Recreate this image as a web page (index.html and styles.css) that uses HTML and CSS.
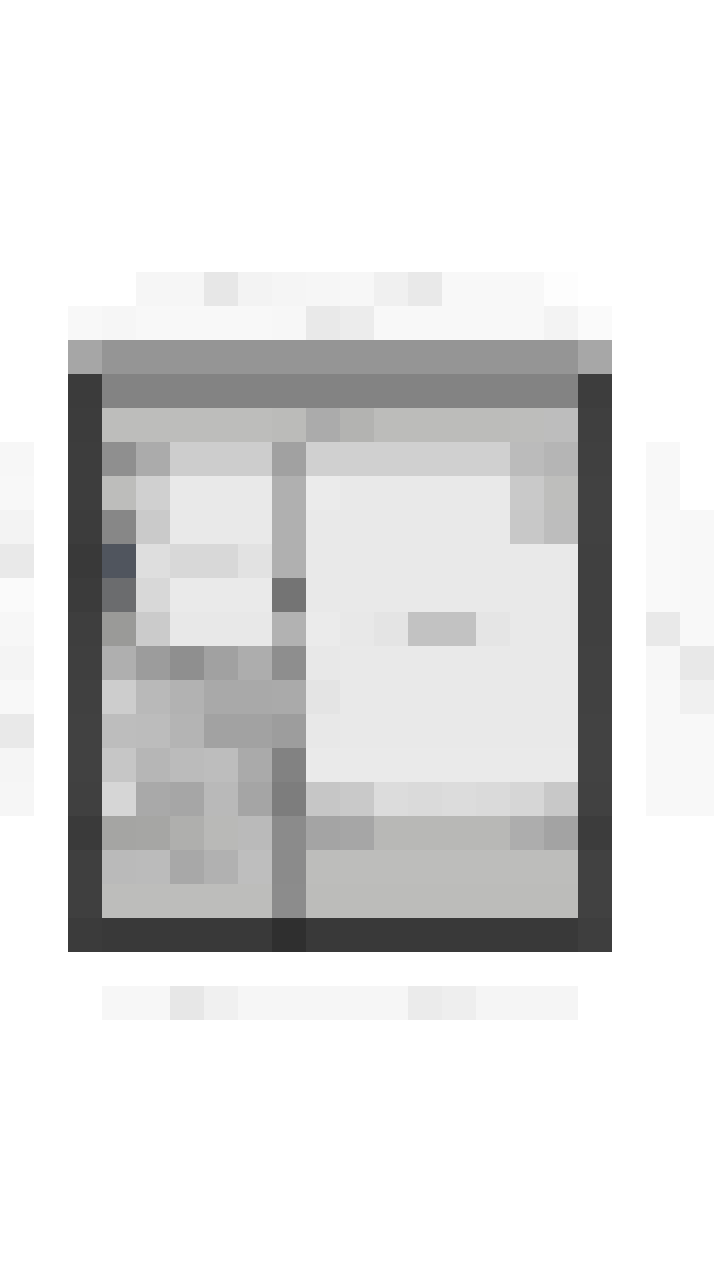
FILE: index.html
```html
<!DOCTYPE html>
<html lang="en">
<head>
<meta charset="utf-8">
<title>Mosaic</title>
<link rel="stylesheet" href="styles.css">
</head>
<body>
<main class="page">
  <div class="mosaic" id="mosaic"></div>
</main>
<script src="script.js"></script>
</body>
</html>
```

FILE: styles.css
```css
html, body {
  margin: 0;
  padding: 0;
  background: #ffffff;
}
.page {
  width: 720px;
  height: 1280px;
  padding-top: 272px;
  box-sizing: border-box;
  overflow: hidden;
}
.mosaic {
  display: grid;
  grid-template-columns: repeat(21, 34px);
  grid-auto-rows: 34px;
}
.px {
  width: 34px;
  height: 34px;
}
```

FILE: script.js
```js
(function () {
  var rows = [
    "ff ff ff ff f6 f6 e7 f3 f5 f6 f7 f0 e9 f8 f8 f8 fd ff ff ff ff",
    "ff ff f8 f6 f8 f8 f8 f8 f7 e9 ec f8 f8 f8 f8 f8 f3 fa ff ff ff",
    "ff ff a6 95 95 95 95 95 95 95 95 95 95 95 95 95 95 a7 ff ff ff",
    "ff ff 3b 83 83 83 83 83 83 83 83 83 83 83 83 83 83 3d ff ff ff",
    "ff ff 3c bdbdbb bdbdbb bdbdbb bdbdbb bdbdbb bbbbb9 ab b3b3b1 bcbcba bcbcba bcbcba bcbcba bdbdbb bd 3f ff ff ff",
    "f7 ff 3d 8f ab cd cd cd a1 d0 d0 d0 d0 d0 d0 bb b5 40 ff f8 ff",
    "f8 ff 3d bdbdbb d0 e9 e9 e9 b0 eb e9 e9 e9 e9 e9 c9 bebebc 41 ff f8 ff",
    "f3 ff 3c 87 ca e9 e9 e9 b0 e9 e9 e9 e9 e9 e9 c8 bd 41 ff f9 f8",
    "e9 ff 39 50555e de d8 d8 e2 b0 e9 e9 e9 e9 e9 e9 e9 e9 40 ff f9 f8",
    "fa ff 3b 6b6c6e d8 ea ea ea 74 e9 e9 e9 e9 e9 e9 e9 e9 40 ff f9 f8",
    "f7 ff 3e 9a9a98 cb e8 e8 e8 b2 eb e8 e4 c2 c2 e5 e9 e9 40 ff e9 f8",
    "f4 ff 3f af 9c 8f a1 ad 8e e8 e9 e9 e9 e9 e9 e9 e9 41 ff f7 e8",
    "f8 ff 40 cd b9 b2 a9 a9 aa e4 e9 e9 e9 e9 e9 e9 e9 41 ff f8 f0",
    "e9 ff 41 bd bc b4 a2 a2 9d e8 e9 e9 e9 e9 e9 e9 e9 42 ff f8 f8",
    "f5 ff 41 c6 b6 bb bd aa 82 ea ea ea ea ea ea ea ea 42 ff f8 f8",
    "f6 ff 40 d6 a9 a6 b9 a5 7d c6 c9 dc da dc da d6 c8 41 ff f8 f8",
    "ff ff 3a a5a5a3 a6a6a4 afafad b9b9b7 ba 8b a4 a6 b8b8b6 b8b8b6 b8b8b6 b8b8b6 ad a3 3c ff ff ff",
    "ff ff 3f ba bb a8 b1 be 8b bdbdbb bdbdbb bdbdbb bdbdbb bdbdbb bdbdbb bdbdbb bdbdbb 41 ff ff ff",
    "ff ff 3f bdbdbb bdbdbb bdbdbb bdbdbb bdbdbb 8c bcbcba bcbcba bcbcba bcbcba bcbcba bcbcba bcbcba bcbcba 41 ff ff ff",
    "ff ff 3b 39 39 39 39 39 2f 39 39 39 39 39 39 39 39 3e ff ff ff",
    "ff ff ff ff ff ff ff ff ff ff ff ff ff ff ff ff ff ff ff ff ff",
    "ff ff ff f7 f7 e7 f0 f6 f6 f6 f6 f6 eb ee f5 f5 f5 ff ff ff ff"
  ];
  var grid = document.getElementById("mosaic");
  var frag = document.createDocumentFragment();
  rows.forEach(function (line) {
    line.split(/\s+/).forEach(function (tok) {
      var hex = tok.length === 2 ? tok + tok + tok : tok;
      var cell = document.createElement("div");
      cell.className = "px";
      cell.style.background = "#" + hex;
      frag.appendChild(cell);
    });
  });
  grid.appendChild(frag);
})();
```
